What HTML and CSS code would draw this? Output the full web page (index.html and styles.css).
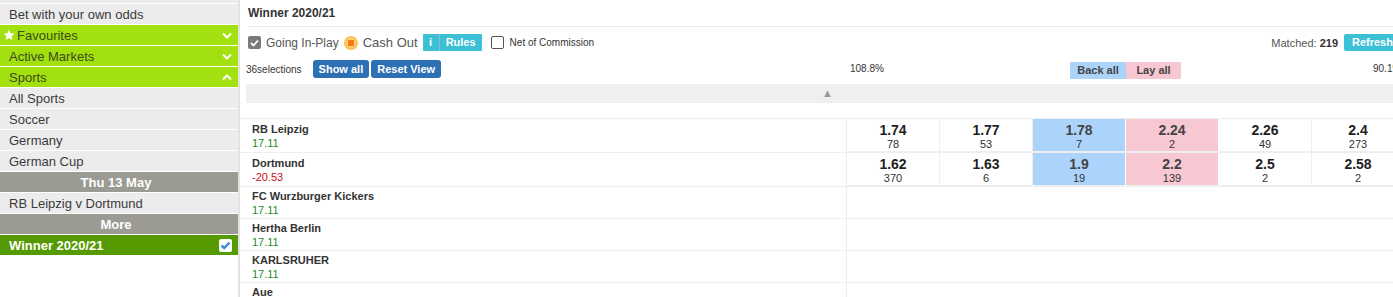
FILE: index.html
```html
<!DOCTYPE html>
<html lang="en">
<head>
    <meta charset="UTF-8">
    <meta name="viewport" content="width=device-width, initial-scale=1.0">
    <title>Winner 2020/21</title>
    <link rel="stylesheet" href="styles.css">
</head>
<body>
    <div class="page">
        <!-- Menu lateral -->
        <div class="sidebar">
            <div class="nav-item stub"></div>
            <div class="nav-item">Bet with your own odds</div>
            <div class="nav-item green">
                <svg class="star" width="12" height="12" viewBox="0 0 24 24"><path d="M12 1.5l3.2 7 7.6.8-5.7 5.1 1.6 7.5L12 18l-6.7 3.9 1.6-7.5L1.2 9.3l7.6-.8z" fill="#fff"/></svg>
                <span>Favourites</span>
                <svg class="chev" width="10" height="7" viewBox="0 0 10 7"><polyline points="1,1.5 5,5.5 9,1.5" fill="none" stroke="#fff" stroke-width="2"/></svg>
            </div>
            <div class="nav-item green">
                <span>Active Markets</span>
                <svg class="chev" width="10" height="7" viewBox="0 0 10 7"><polyline points="1,1.5 5,5.5 9,1.5" fill="none" stroke="#fff" stroke-width="2"/></svg>
            </div>
            <div class="nav-item green">
                <span>Sports</span>
                <svg class="chev" width="10" height="7" viewBox="0 0 10 7"><polyline points="1,5.5 5,1.5 9,5.5" fill="none" stroke="#fff" stroke-width="2"/></svg>
            </div>
            <div class="nav-item">All Sports</div>
            <div class="nav-item">Soccer</div>
            <div class="nav-item">Germany</div>
            <div class="nav-item">German Cup</div>
            <div class="nav-item heading">Thu 13 May</div>
            <div class="nav-item">RB Leipzig v Dortmund</div>
            <div class="nav-item heading">More</div>
            <div class="nav-item selected">
                <span>Winner 2020/21</span>
                <span class="tick">
                    <svg width="11" height="9" viewBox="0 0 11 9"><polyline points="1.5,4.5 4.2,7 9.5,1.5" fill="none" stroke="#3b8fd9" stroke-width="2.4"/></svg>
                </span>
            </div>
        </div>

        <!-- Mercado -->
        <div class="market">
            <div class="market-title">Winner 2020/21</div>

            <div class="toolbar">
                <span class="check checked">
                    <svg width="9" height="8" viewBox="0 0 9 8"><polyline points="1,4 3.5,6.5 8,1.5" fill="none" stroke="#fff" stroke-width="1.8"/></svg>
                </span>
                <span class="opt">Going In-Play</span>
                <span class="cashout"><span></span></span>
                <span class="opt wide">Cash Out</span>
                <span class="rules"><span class="info">i</span><span class="rules-text">Rules</span></span>
                <span class="check empty"></span>
                <span class="small">Net of Commission</span>
                <span class="spacer"></span>
                <span class="matched">Matched: <b>219</b></span>
                <span class="refresh">Refresh</span>
            </div>

            <div class="selections">
                <div class="sel-left">
                    <span class="count">36selections</span>
                    <span class="btn">Show all</span>
                    <span class="btn">Reset View</span>
                </div>
                <div class="odds-head">
                    <span class="pct">108.8%</span>
                    <span></span>
                    <span class="all back">Back all</span>
                    <span class="all lay">Lay all</span>
                    <span></span>
                    <span class="pct right">90.1%</span>
                </div>
            </div>

            <div class="collapse-bar">&#9650;</div>

            <div class="runners">
                <div class="runner">
                    <div class="name">RB Leipzig<span class="pl up">17.11</span></div>
                    <div class="prices">
                        <div class="price"><b>1.74</b>78</div>
                        <div class="price"><b>1.77</b>53</div>
                        <div class="price back"><b>1.78</b>7</div>
                        <div class="price lay"><b>2.24</b>2</div>
                        <div class="price"><b>2.26</b>49</div>
                        <div class="price"><b>2.4</b>273</div>
                    </div>
                </div>
                <div class="runner">
                    <div class="name">Dortmund<span class="pl down">-20.53</span></div>
                    <div class="prices">
                        <div class="price"><b>1.62</b>370</div>
                        <div class="price"><b>1.63</b>6</div>
                        <div class="price back"><b>1.9</b>19</div>
                        <div class="price lay"><b>2.2</b>139</div>
                        <div class="price"><b>2.5</b>2</div>
                        <div class="price"><b>2.58</b>2</div>
                    </div>
                </div>
                <div class="runner plain">
                    <div class="name">FC Wurzburger Kickers<span class="pl up">17.11</span></div>
                    <div class="prices"></div>
                </div>
                <div class="runner plain">
                    <div class="name">Hertha Berlin<span class="pl up">17.11</span></div>
                    <div class="prices"></div>
                </div>
                <div class="runner plain">
                    <div class="name">KARLSRUHER<span class="pl up">17.11</span></div>
                    <div class="prices"></div>
                </div>
                <div class="runner plain">
                    <div class="name">Aue<span class="pl up">17.11</span></div>
                    <div class="prices"></div>
                </div>
            </div>
        </div>
    </div>
</body>
</html>
```

FILE: styles.css
```css
html, body {
    margin: 0;
    padding: 0;
    height: 100%;
    overflow: hidden;
}

body {
    font-family: "Liberation Sans", Arial, sans-serif;
    background: #fff;
    color: #333;
}

.page {
    display: flex;
    height: 100%;
}

/* Menu lateral */
.sidebar {
    flex: none;
    width: 238px;
    border-right: 2px solid #e2e2e2;
}

.nav-item {
    display: flex;
    align-items: center;
    height: 20px;
    padding-left: 9px;
    padding-right: 6px;
    border-bottom: 1px solid #fff;
    background: #ececec;
    font-size: 13px;
    color: #3a3a3a;
}

.nav-item.stub {
    height: 3px;
}

.nav-item.green {
    background: #a2e10f;
    color: #3d4a1c;
}

.nav-item .star {
    margin-left: -6px;
    margin-right: 2px;
}

.nav-item .chev {
    margin-left: auto;
}

.nav-item.heading {
    justify-content: center;
    padding-left: 0;
    background: #9b9b93;
    color: #fff;
    font-weight: bold;
}

.nav-item.selected {
    background: #559a00;
    color: #fff;
    font-weight: bold;
}

.tick {
    margin-left: auto;
    width: 13px;
    height: 13px;
    background: #fff;
    border-radius: 2px;
    display: flex;
    align-items: center;
    justify-content: center;
}

/* Mercado */
.market {
    flex: none;
    width: 1172px;
}

.market-title {
    margin-left: 8px;
    height: 26px;
    line-height: 26px;
    border-bottom: 1px solid #ececec;
    font-size: 12px;
    font-weight: bold;
    color: #333;
}

.toolbar {
    display: flex;
    align-items: center;
    height: 17px;
    margin-top: 7px;
    padding-left: 8px;
    font-size: 12px;
    color: #555;
}

.opt.wide {
    font-size: 13px;
}

.check {
    display: inline-flex;
    align-items: center;
    justify-content: center;
    width: 13px;
    height: 13px;
    box-sizing: border-box;
    border-radius: 2px;
}

.check.checked {
    background: #7a7a7a;
    margin-right: 5px;
}

.check.empty {
    border: 1px solid #555;
    margin-left: 9px;
    margin-right: 6px;
}

.cashout {
    display: inline-flex;
    align-items: center;
    justify-content: center;
    width: 14px;
    height: 14px;
    box-sizing: border-box;
    border: 2px solid #f9c24a;
    border-radius: 50%;
    background: #fbd27a;
    margin-left: 5px;
    margin-right: 5px;
}

.cashout span {
    width: 6px;
    height: 6px;
    background: #f57c15;
}

.rules {
    display: inline-flex;
    height: 17px;
    line-height: 17px;
    margin-left: 5px;
    background: #3cc0d6;
    color: #fff;
    font-size: 11px;
    font-weight: bold;
    border-radius: 1px;
}

.rules .info {
    width: 16px;
    text-align: center;
    border-right: 1px solid #8fb6df;
}

.rules .rules-text {
    padding: 0 6px;
}

.small {
    font-size: 10px;
    color: #333;
}

.spacer {
    flex: 1;
}

.matched {
    font-size: 11px;
    color: #555;
    margin-right: 6px;
}

.matched b {
    color: #333;
}

.refresh {
    width: 60px;
    padding-left: 8px;
    height: 17px;
    line-height: 17px;
    background: #3cc0d6;
    color: #fff;
    font-size: 11px;
    font-weight: bold;
    border-radius: 2px 0 0 2px;
}

.selections {
    display: flex;
    align-items: center;
    height: 18px;
    margin-top: 9px;
}

.sel-left {
    display: flex;
    align-items: center;
    width: 606px;
    padding-left: 6px;
    box-sizing: border-box;
}

.count {
    font-size: 10px;
    color: #333;
    margin-right: 11px;
}

.btn {
    height: 18px;
    line-height: 18px;
    padding: 0 6px;
    margin-right: 2px;
    background: #2d70b3;
    border-radius: 3px;
    color: #fff;
    font-size: 11px;
    font-weight: bold;
}

.odds-head {
    align-self: flex-start;
    display: grid;
    grid-template-columns: repeat(6, 93px);
    align-items: start;
    font-size: 10px;
}

.odds-head .pct {
    padding-left: 4px;
    line-height: 18px;
}

.odds-head .pct.right {
    padding-left: 62px;
}

.all {
    height: 17px;
    line-height: 17px;
    margin-top: 2px;
    font-size: 11px;
    font-weight: bold;
    color: #444;
    text-align: center;
    width: 56px;
}

.all.back {
    justify-self: end;
    background: #acd4fb;
    margin-right: -1px;
}

.all.lay {
    justify-self: start;
    background: #f8c8d2;
    margin-left: 1px;
    width: 55px;
}

.collapse-bar {
    margin: 6px 0 0 6px;
    height: 19px;
    line-height: 19px;
    background: #efefef;
    color: #959aa0;
    font-size: 11px;
    padding-left: 576px;
}

.runners {
    margin-top: 15px;
    border-top: 1px solid #eeeeee;
}

.runner {
    display: flex;
    border-bottom: 1px solid #eeeeee;
}

.runner .name {
    width: 606px;
    flex: none;
    box-sizing: border-box;
    padding: 4px 0 0 12px;
    height: 33px;
    font-size: 11px;
    font-weight: bold;
    color: #333;
}

.runner.plain .name {
    height: 31px;
    padding-top: 3px;
}

.pl {
    display: block;
    margin-top: 2px;
    font-weight: normal;
}

.pl.up {
    color: #258a25;
}

.pl.down {
    color: #c8101b;
}

.prices {
    display: grid;
    grid-template-columns: repeat(6, 93px);
    border-left: 1px solid #eeeeee;
}

.price {
    display: flex;
    flex-direction: column;
    align-items: center;
    height: 33px;
    box-sizing: border-box;
    padding-top: 3px;
    border-right: 1px solid #eeeeee;
    border-bottom: 1px solid #eef0f0;
    font-size: 11px;
    line-height: 12px;
    color: #333;
}

.price b {
    font-size: 14px;
    line-height: 16px;
    color: #1f1f1f;
}

.price.back {
    background: #acd4fb;
    border-right-color: #fff;
}

.price.lay {
    background: #f8c8d2;
    border-right-color: #fff;
}

.price.back b, .price.lay b {
    color: #444;
}
```
